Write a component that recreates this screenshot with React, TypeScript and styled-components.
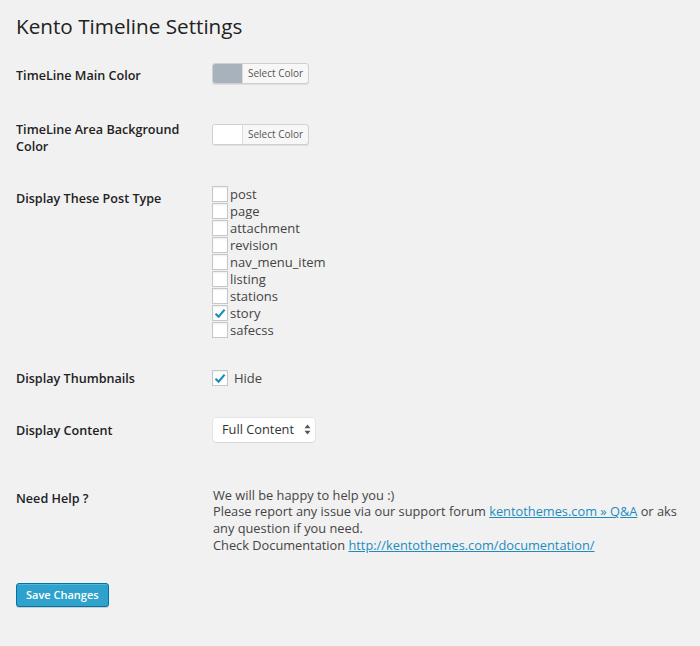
import React from 'react';
import styled, { createGlobalStyle } from 'styled-components';

const GlobalStyle = createGlobalStyle`
	html, body {
		margin: 0;
		padding: 0;
		background: #f1f1f1;
	}
	body {
		font-family: 'Open Sans', 'Liberation Sans', sans-serif;
		color: #444;
		font-size: 13px;
	}
`;

const Wrap = styled.div`
	padding: 12px 16px 0 16px;
	width: 700px;
	height: 646px;
	box-sizing: border-box;
`;

const Title = styled.h2`
	margin: 0;
	font-size: 20.7px;
	font-weight: 400;
	line-height: 29px;
	color: #222;
`;

const Row = styled.div<{ $top: number }>`
	display: grid;
	grid-template-columns: 196px 1fr;
	align-items: start;
	margin-top: ${(p) => p.$top}px;
`;

const Label = styled.div<{ $top?: number }>`
	font-weight: 600;
	font-size: 12.6px;
	line-height: 17px;
	color: #222;
	padding-top: ${(p) => p.$top ?? 0}px;
	padding-right: 20px;
`;

const Value = styled.div<{ $top?: number }>`
	padding-top: ${(p) => p.$top ?? 0}px;
	font-size: 13px;
	line-height: 16.7px;
	color: #444;
`;

const ColorButton = styled.div`
	display: inline-flex;
	align-items: stretch;
	height: 21px;
	border: 1px solid #d0d0d0;
	border-radius: 3px;
	background: #f7f7f7;
	box-shadow: 0 1px 0 rgba(0, 0, 0, 0.08);
	overflow: hidden;
	box-sizing: border-box;
`;

const Swatch = styled.span<{ $color: string }>`
	width: 29px;
	background: ${(p) => p.$color};
	border-right: 1px solid #ddd;
`;

const SwatchText = styled.span`
	font-size: 10px;
	line-height: 19px;
	padding: 0 5px;
	color: #555;
`;

const CheckList = styled.div`
	display: flex;
	flex-direction: column;
`;

const CheckRow = styled.label<{ $gap?: number }>`
	display: flex;
	align-items: center;
	height: 17px;
	gap: ${(p) => p.$gap ?? 2}px;
`;

const Box = styled.span`
	width: 16px;
	height: 16px;
	box-sizing: border-box;
	border: 1px solid #c4c8cc;
	background: #fff;
	box-shadow: inset 0 1px 2px rgba(0, 0, 0, 0.07);
	display: inline-flex;
	align-items: center;
	justify-content: center;
	flex: none;
`;

const Select = styled.div`
	display: inline-flex;
	align-items: center;
	justify-content: space-between;
	margin-left: 1px;
	width: 102px;
	height: 24px;
	box-sizing: border-box;
	padding: 0 4px 0 9px;
	background: #fff;
	border-radius: 4px;
	box-shadow: 0 0 0 1px rgba(0, 0, 0, 0.05), 0 1px 1px rgba(0, 0, 0, 0.06);
	font-size: 12.8px;
	color: #333;
`;

const HelpText = styled.div`
	margin-left: 1px;
	font-size: 12.8px;
`;

const Link = styled.a`
	color: #1e8cbe;
	text-decoration: underline;
`;

const SaveButton = styled.button`
	margin-top: 29px;
	height: 24px;
	padding: 0 9px;
	font-family: 'Open Sans', 'Liberation Sans', sans-serif;
	font-size: 11px;
	font-weight: 600;
	color: #fff;
	background: #2ea2cc;
	border: 1px solid #0074a2;
	border-radius: 3px;
	box-shadow: inset 0 1px 0 rgba(120, 200, 230, 0.5), 0 1px 0 rgba(0, 0, 0, 0.15);
	cursor: pointer;
`;

const Check = () => (
	<svg width='12' height='11' viewBox='0 0 12 11'>
		<path d='M1.5 5.8 L4.6 8.6 L10.6 1.6' fill='none' stroke='#1e8cbe' strokeWidth='2.2' />
	</svg>
);

const Checkbox = ({ label, checked }: { label: string; checked?: boolean }) => (
	<CheckRow>
		<Box>{checked && <Check />}</Box>
		<span>{label}</span>
	</CheckRow>
);

const Arrows = () => (
	<svg width='7' height='11' viewBox='0 0 7 11'>
		<path d='M3.5 0.5 L6.5 4.2 H0.5 Z M3.5 10.5 L0.5 6.8 H6.5 Z' fill='#555' />
	</svg>
);

const postTypes = ['post', 'page', 'attachment', 'revision', 'nav_menu_item', 'listing', 'stations', 'story', 'safecss'];

export default function App() {
	return (
		<Wrap>
			<GlobalStyle />
			<Title>Kento Timeline Settings</Title>

			<Row $top={22}>
				<Label $top={4}>TimeLine Main Color</Label>
				<Value>
					<ColorButton>
						<Swatch $color='#a7b2bc' />
						<SwatchText>Select Color</SwatchText>
					</ColorButton>
				</Value>
			</Row>

			<Row $top={34}>
				<Label>TimeLine Area Background Color</Label>
				<Value $top={3}>
					<ColorButton>
						<Swatch $color='#fff' />
						<SwatchText>Select Color</SwatchText>
					</ColorButton>
				</Value>
			</Row>

			<Row $top={31}>
				<Label $top={4}>Display These Post Type</Label>
				<Value>
					<CheckList>
						{postTypes.map((t) => (
							<Checkbox key={t} label={t} checked={t === 'story'} />
						))}
					</CheckList>
				</Value>
			</Row>

			<Row $top={30}>
				<Label $top={1}>Display Thumbnails</Label>
				<Value $top={1}>
					<CheckRow $gap={6}>
						<Box>
							<Check />
						</Box>
						<span>Hide</span>
					</CheckRow>
				</Value>
			</Row>

			<Row $top={31}>
				<Label $top={4}>Display Content</Label>
				<Value>
					<Select>
						<span>Full Content</span>
						<Arrows />
					</Select>
				</Value>
			</Row>

			<Row $top={45}>
				<Label $top={3}>Need Help ?</Label>
				<Value>
					<HelpText>
						We will be happy to help you :)
						<br />
						Please report any issue via our support forum <Link href='#'>kentothemes.com » Q&amp;A</Link> or aks
						<br />
						any question if you need.
						<br />
						Check Documentation <Link href='#'>http://kentothemes.com/documentation/</Link>
					</HelpText>
				</Value>
			</Row>

			<SaveButton>Save Changes</SaveButton>
		</Wrap>
	);
}
